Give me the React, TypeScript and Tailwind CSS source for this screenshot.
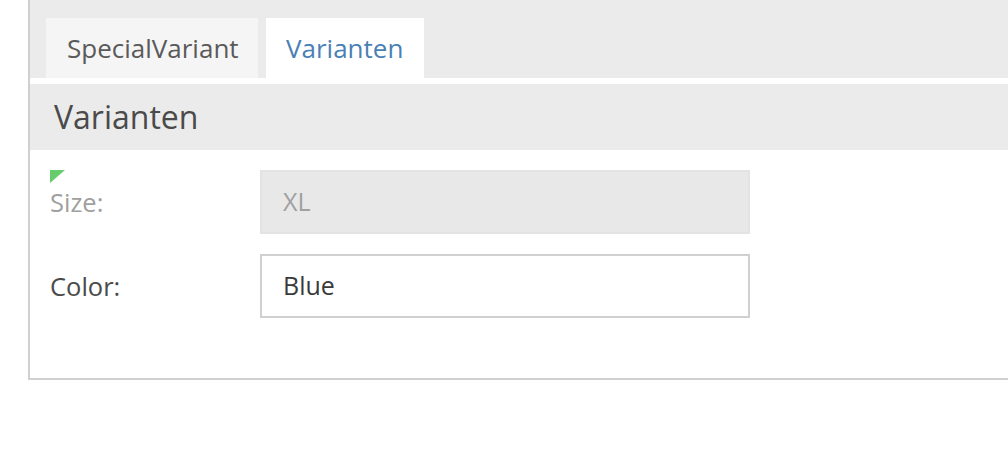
const font = { fontFamily: '"Open Sans", "Noto Sans", sans-serif' };

const FieldRow = ({
  label,
  value,
  disabled,
  changed,
}: {
  label: string;
  value: string;
  disabled?: boolean;
  changed?: boolean;
}) => {
  return (
    <div className="relative flex items-center h-[64px]">
      {changed && (
        <div className="absolute left-0 top-0 w-0 h-0 border-t-[13px] border-t-[#66cc6e] border-r-[15px] border-r-transparent" />
      )}
      <label
        className={`w-[210px] text-[25.5px] ${disabled ? "text-[#a0a0a0]" : "text-[#4a4a4a]"}`}
      >
        {label}
      </label>
      <div
        className={`w-[490px] h-[64px] flex items-center pl-[21px] text-[25px] border-2 ${
          disabled
            ? "bg-[#e8e8e8] border-[#e3e3e3] text-[#a0a0a0]"
            : "bg-white border-[#d0d0d0] text-[#3a3a3a]"
        }`}
      >
        {value}
      </div>
    </div>
  );
};

export default function App() {
  return (
    <div className="w-[1008px] h-[466px] bg-white overflow-hidden" style={font}>
      <div className="ml-[28px] w-[1000px] border-l-2 border-b-2 border-[#d0d0d0]">
        {/* Tabs */}
        <div className="h-[78px] bg-[#ebebeb] flex items-end gap-[8px] pl-[16px]">
          <div className="h-[60px] w-[212px] bg-[#f5f5f5] flex items-center pl-[21px] text-[26px] text-[#5a5a5a]">
            SpecialVariant
          </div>
          <div className="h-[60px] w-[158px] bg-white flex items-center pl-[20px] text-[26px] text-[#4a7fb5]">
            Varianten
          </div>
        </div>

        {/* Section header */}
        <div className="mt-[6px] h-[66px] bg-[#ebebeb] flex items-center pl-[24px] text-[32px] text-[#4a4a4a]">
          Varianten
        </div>

        {/* Fields */}
        <div className="pl-[20px] pt-[20px] pb-[60px] flex flex-col gap-[20px]">
          <FieldRow label="Size:" value="XL" disabled changed />
          <FieldRow label="Color:" value="Blue" />
        </div>
      </div>
    </div>
  );
}
